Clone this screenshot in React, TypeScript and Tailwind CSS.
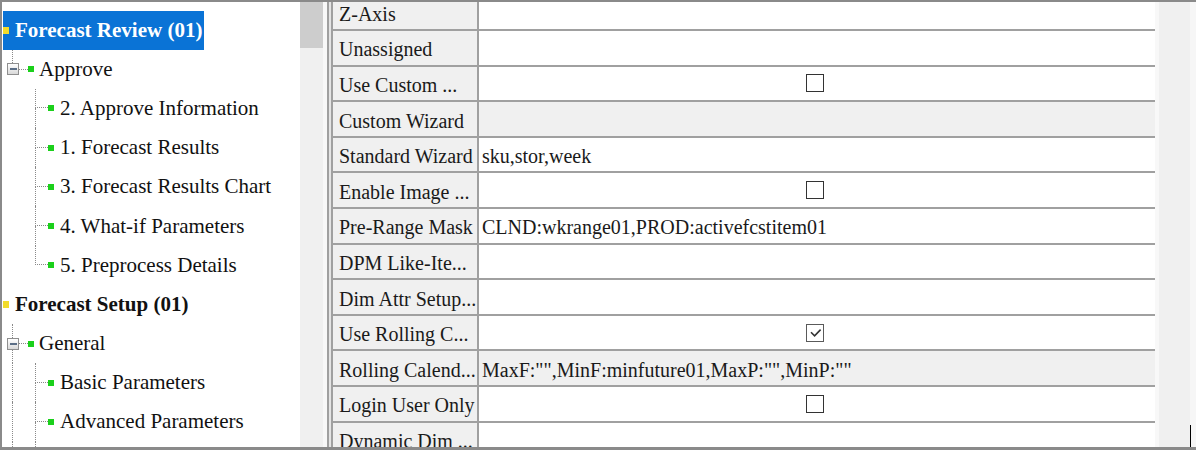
import type { ReactNode } from "react";

const dot = "border-dotted border-[#8a8a8a]";

function Square({ color }: { color: "yellow" | "green" }) {
  return (
    <span
      className={
        color === "yellow"
          ? "h-[7px] w-[6px] shrink-0 bg-[#f2dc2c]"
          : "h-[6px] w-[6px] shrink-0 bg-[#1bd01b]"
      }
    />
  );
}

function RootRow({ label, selected }: { label: string; selected?: boolean }) {
  return (
    <div className="flex h-[39.2px] items-stretch pl-[1px]">
      <div className={`flex items-center pr-[2px] ${selected ? "bg-[#0a73d6] text-white" : "text-[#111]"}`}>
        <Square color="yellow" />
        <span className="ml-[6px] font-bold">{label}</span>
      </div>
    </div>
  );
}

function GroupRow({ label, last }: { label: string; last: boolean }) {
  return (
    <div className="flex h-[39.2px] items-stretch">
      <div className="flex w-[17px] shrink-0 flex-col">
        <div className={`ml-[10px] flex-1 border-l ${dot}`} />
        <div className="ml-[5px] flex h-[12px] w-[12px] items-center justify-center border border-[#8f8f8f] bg-gradient-to-b from-white to-[#d9d9d9]">
          <div className="h-[2px] w-[7px] bg-[#5b6e86]" />
        </div>
        <div className={`ml-[10px] flex-1 ${last ? "" : `border-l ${dot}`}`} />
      </div>
      <div className={`w-[9px] self-center border-t ${dot}`} />
      <div className="flex items-center">
        <Square color="green" />
        <span className="ml-[5px] text-[#111]">{label}</span>
      </div>
    </div>
  );
}

function LeafRow({ label, last, parentLast }: { label: string; last: boolean; parentLast: boolean }) {
  return (
    <div className="flex h-[39.2px] items-stretch">
      <div className="w-[33px] shrink-0">
        <div className={`ml-[10px] h-full ${parentLast ? "" : `border-l ${dot}`}`} />
      </div>
      <div className="flex w-[13px] shrink-0 flex-col">
        <div className={`h-1/2 border-b border-l ${dot}`} />
        <div className={`h-1/2 ${last ? "" : `border-l ${dot}`}`} />
      </div>
      <div className="flex items-center">
        <Square color="green" />
        <span className="ml-[6px] whitespace-nowrap text-[#111]">{label}</span>
      </div>
    </div>
  );
}

const reviewItems = [
  "2. Approve Information",
  "1. Forecast Results",
  "3. Forecast Results Chart",
  "4. What-if Parameters",
  "5. Preprocess Details",
];

const setupItems = ["Basic Parameters", "Advanced Parameters"];

function Checkbox({ checked }: { checked?: boolean }) {
  return (
    <span
      className={`flex h-[18px] w-[18px] items-center justify-center border-[1.5px] bg-white ${checked ? "border-[#5a5a5a]" : "border-[#333]"}`}
    >
      {checked && (
        <svg width="15" height="15" viewBox="0 0 15 15">
          <path d="M3 7.2 L6.6 10.8 L12.6 4.6" fill="none" stroke="#333" strokeWidth="1.6" />
        </svg>
      )}
    </span>
  );
}

type Row = { label: string; value?: ReactNode; gray?: boolean; check?: boolean; checked?: boolean };

const rows: Row[] = [
  { label: "Z-Axis" },
  { label: "Unassigned" },
  { label: "Use Custom ...", check: true },
  { label: "Custom Wizard", gray: true },
  { label: "Standard Wizard", value: "sku,stor,week" },
  { label: "Enable Image ...", check: true },
  { label: "Pre-Range Mask", value: "CLND:wkrange01,PROD:activefcstitem01" },
  { label: "DPM Like-Ite..." },
  { label: "Dim Attr Setup..." },
  { label: "Use Rolling C...", check: true, checked: true },
  { label: "Rolling Calend...", value: 'MaxF:"",MinF:minfuture01,MaxP:"",MinP:""', gray: true },
  { label: "Login User Only", check: true },
  { label: "Dynamic Dim ..." },
];

export default function App() {
  return (
    <div className="flex h-[450px] w-[1196px] overflow-hidden border-b-[3px] border-l-2 border-t-2 border-[#8a8a8a] bg-white font-['Liberation_Serif',serif]">
      {/* tree */}
      <div className="w-[298px] shrink-0 overflow-hidden pt-[8.5px] text-[21px] leading-none">
        <RootRow label="Forecast Review (01)" selected />
        <GroupRow label="Approve" last />
        {reviewItems.map((t, i) => (
          <LeafRow key={t} label={t} last={i === reviewItems.length - 1} parentLast />
        ))}
        <RootRow label="Forecast Setup (01)" />
        <GroupRow label="General" last={false} />
        {setupItems.map((t) => (
          <LeafRow key={t} label={t} last={false} parentLast={false} />
        ))}
        <LeafRow label="" last={false} parentLast={false} />
      </div>

      {/* tree scrollbar */}
      <div className="w-[23px] shrink-0 bg-[#f0f0f0]">
        <div className="h-[46px] bg-[#cdcdcd]" />
      </div>

      {/* splitter */}
      <div className="flex w-[10px] shrink-0">
        <div className="w-[4px] bg-[#f8f8f8]" />
        <div className="w-[2px] bg-[#a0a0a0]" />
        <div className="w-[2px] bg-[#e4e4e4]" />
        <div className="w-[2px] bg-[#a0a0a0]" />
      </div>

      {/* property grid */}
      <div className="w-[822px] shrink-0 overflow-hidden text-[20px] leading-none text-[#1a1a1a]">
        <div className="-mt-[6.5px]">
          {rows.map((r) => (
            <div key={r.label} className="flex h-[35.6px] border-b-2 border-[#a0a0a0]">
              <div className="flex w-[146px] shrink-0 items-center overflow-hidden whitespace-nowrap border-r-2 border-[#a0a0a0] bg-[#f0f0f0] pl-[6px] pt-[3px]">
                {r.label}
              </div>
              <div
                className={`flex flex-1 items-center whitespace-nowrap ${r.gray ? "bg-[#f0f0f0]" : "bg-white"} ${r.check ? "justify-center pr-[4px]" : "pl-[3px] pt-[3px]"}`}
              >
                {r.check ? <Checkbox checked={r.checked} /> : r.value}
              </div>
            </div>
          ))}
        </div>
      </div>

      {/* grid scrollbar */}
      <div className="flex w-[35px] shrink-0 bg-[#f0f0f0]">
        <div className="w-[4px] bg-[#f8f8f8]" />
      </div>

      {/* right edge */}
      <div className="flex w-[6px] shrink-0 flex-col bg-[#f6f6f6]">
        <div className="flex-1" />
        <div className="h-[22px] border-l border-black" />
      </div>
    </div>
  );
}
